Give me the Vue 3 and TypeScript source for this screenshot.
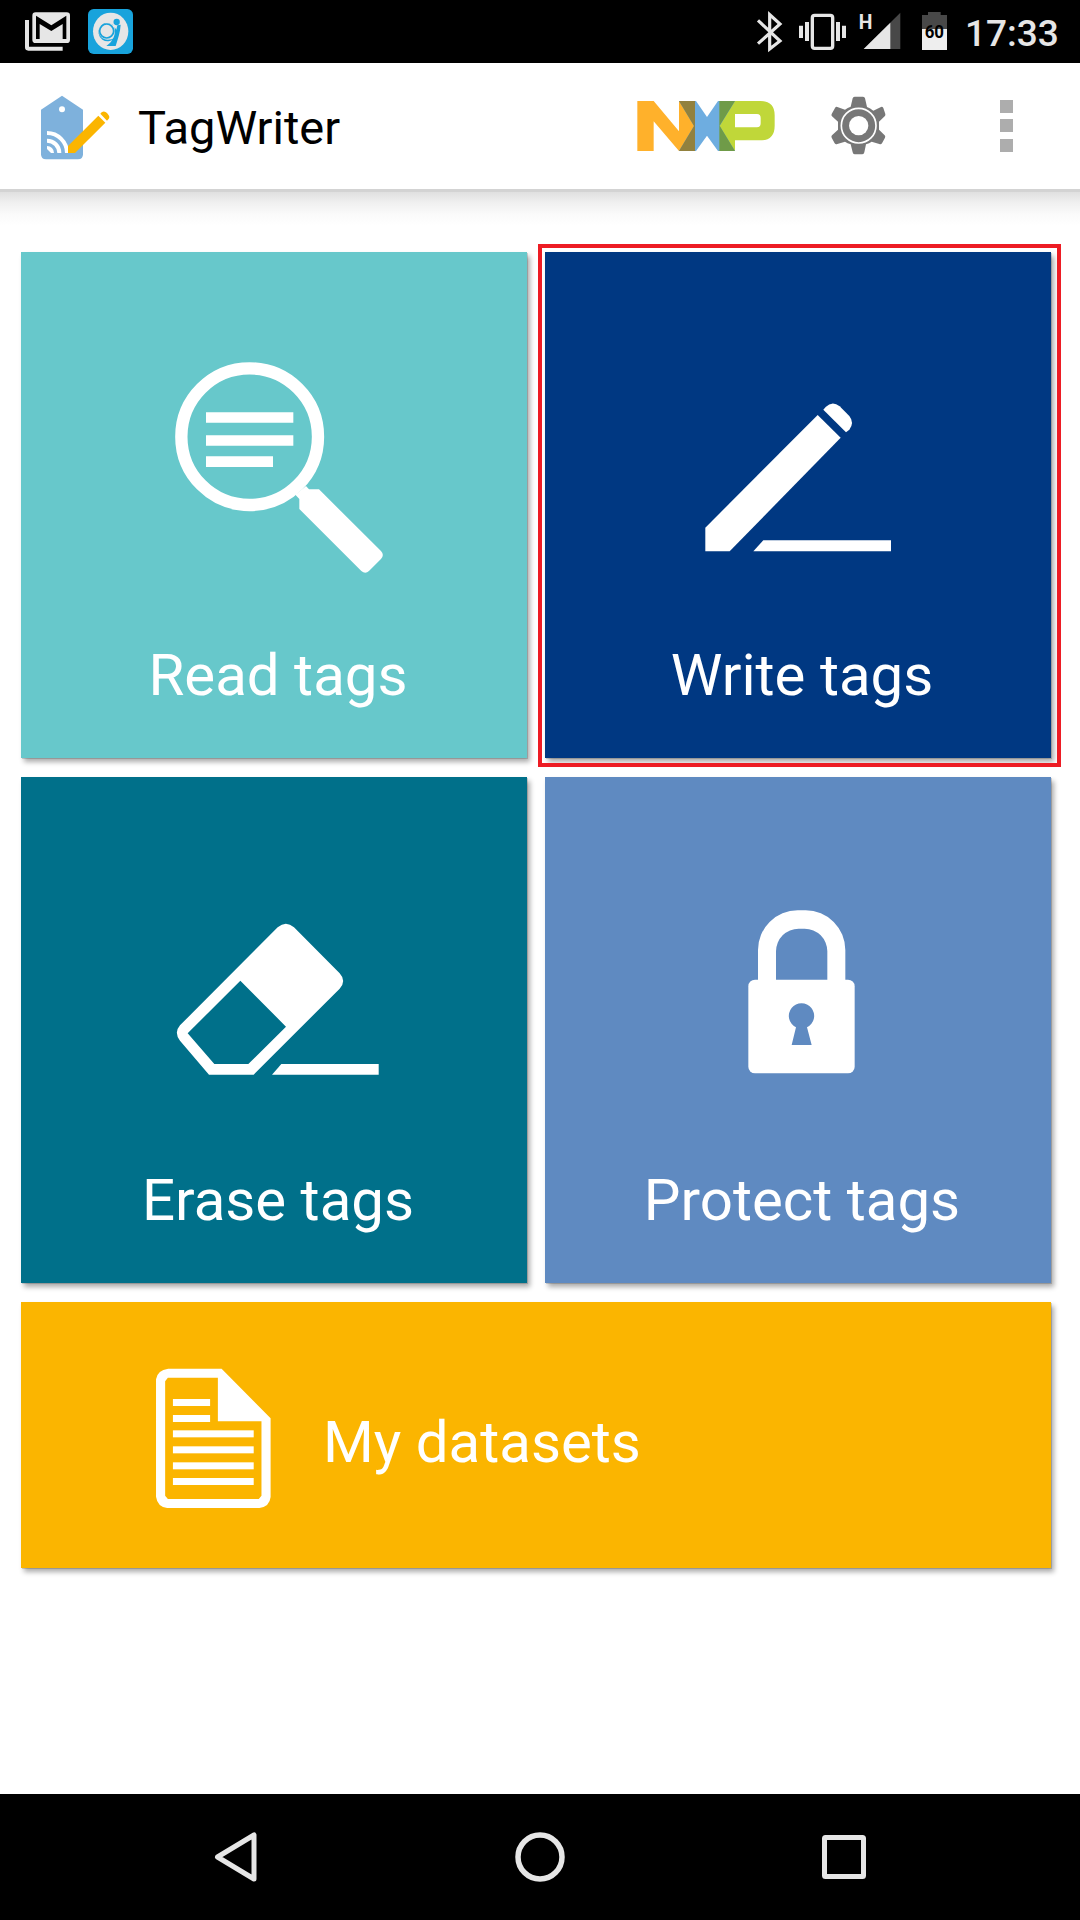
<script setup lang="ts">
interface Tile {
  id: string
  label: string
  color: string
  view: string
}

const tiles: Tile[] = [
  { id: 'read', label: 'Read tags', color: '#67c8cb', view: '21 252 506 390' },
  { id: 'write', label: 'Write tags', color: '#003882', view: '545 252 506 390' },
  { id: 'erase', label: 'Erase tags', color: '#00708a', view: '21 777 506 390' },
  { id: 'protect', label: 'Protect tags', color: '#5f8ac1', view: '545 777 506 390' },
]

const fileLines = [
  { y: 177, w: 110 },
  { y: 225, w: 110 },
  { y: 271, w: 239 },
  { y: 319, w: 239 },
  { y: 367, w: 239 },
  { y: 414, w: 239 },
]
</script>

<template>
  <div class="screen">
    <div class="status">
      <svg class="status-left" viewBox="0 0 480 189">
        <path d="M75 60h12v80h101v12H85q-10 0-10-10z" fill="#e6e6e6" />
        <rect x="97" y="37" width="113" height="92" rx="10" fill="#e6e6e6" />
        <path d="M108 117V47l46 29 45-29v70h-11V72l-34 21-35-21v45z" fill="#000" />
        <rect x="264" y="27" width="135" height="135" rx="17" fill="#18a3dc" />
        <ellipse cx="332" cy="94" rx="53" ry="56" fill="#e6e6e6" />
        <circle cx="350" cy="66" r="9.500" fill="#18a3dc" />
        <path d="M344 82l5 7 3-13 10-2c-1 23-9 43-15 64h-28c14-9 21-20 25-36z" fill="#18a3dc" />
        <path d="M341 77a27 27 0 1 0 5 33c-7 7-14 9-23 9-15 0-26-11-26-25 0-15 11-25 25-25 8 0 14 3 19 8z" fill="#18a3dc" />
        <circle cx="320" cy="93" r="21" fill="none" stroke="#18a3dc" stroke-width="5" />
      </svg>
      <svg class="status-right" viewBox="0 0 690 189">
        <path d="M84 61l66 62-31 24V44l31 28-66 59" fill="none" stroke="#e6e6e6" stroke-width="9.500" />
        <rect x="247" y="46" width="61" height="99" rx="7" fill="none" stroke="#e6e6e6" stroke-width="10" />
        <path d="M207 77h12v37h-12zM225 66h12v57h-12zM318 66h12v57h-12zM336 77h12v37h-12z" fill="#e6e6e6" />
        <text x="386" y="86" class="net" textLength="41" lengthAdjust="spacingAndGlyphs">H</text>
        <path d="M511 38v109H401z" fill="#484848" />
        <path d="M481 68v79H401z" fill="#e6e6e6" />
        <path d="M576 45h18v-9h38v9h19v42h-75z" fill="#484848" />
        <path d="M576 87h75v63h-75z" fill="#eee" />
        <text x="584" y="115" textLength="58" lengthAdjust="spacingAndGlyphs" class="level">60</text>
      </svg>
      <span class="clock">17:33</span>
    </div>

    <header class="bar">
      <svg class="logo" viewBox="0 189 390 378">
        <path d="M123 329l63-42 63 42v134q0 15-15 15h-96q-15 0-15-15z" fill="#7eb1dc" />
        <circle cx="186" cy="328" r="9" fill="#fff" />
        <g fill="none" stroke="#fff" stroke-width="12">
          <path d="M141 399a60 60 0 0 1 60 60" />
          <path d="M141 422a37 37 0 0 1 37 37" />
        </g>
        <path d="M141 438a21 21 0 0 1 21 21h-9l-12-12z" fill="#fff" />
        <path d="M204 438l91-91 21 21-91 91h-21z" fill="#fbb500" />
        <path d="M301 341l4-4q8-6 16 2l4 5q6 7 0 14l-4 4z" fill="#fbb500" />
      </svg>
      <h1>TagWriter</h1>
      <svg class="actions" viewBox="600 189 1440 378">
        <g transform="translate(600 180)">
          <path d="M112 123h49l76 91v-91h49v150h-49l-76-89v89h-49z" fill="#ffb12b" />
          <path d="M237 123h51l33 48 33-48h51v150h-51l-33-46-33 46h-51l45-75z" fill="#6eade0" />
          <path d="M237 123h48v150h-48l45-75z" fill="#92813e" />
          <path d="M405 123h76q43 0 43 43v31q0 44-43 44h-76v32l-46-75zM405 162v40h66q11 0 11-12v-16q0-12-11-12z" fill="#c0d739" fill-rule="evenodd" />
          <path d="M358 123h47l-46 74 46 76h-47z" fill="#6f9b48" />
          <path d="M764 110h25q5 0 6 5l6 26q10 4 19 11l23-11q4-2 7 3l6 18q1 4-2 7l-17 16v24l17 17q3 3 1 7l-9 17q-3 4-8 2l-23-7q-7 5-17 8l-5 24q-1 6-6 6h-23q-5 0-6-6l-6-24q-10-3-17-8l-23 7q-5 2-8-2l-9-17q-2-4 1-7l18-17v-24l-18-16q-3-3-1-7l10-18q3-5 7-3l23 8q8-6 17-9l6-25q1-5 6-5z" fill="#777" />
          <circle cx="776" cy="197" r="52" fill="none" stroke="#fff" stroke-width="5" />
          <circle cx="776" cy="197" r="29" fill="#fff" />
          <path d="M1200 120h39v39h-39zM1200 177h39v39h-39zM1200 237h39v39h-39z" fill="#adadad" />
        </g>
      </svg>
    </header>

    <main class="content">
      <div class="grid">
        <button
          v-for="tile in tiles"
          :key="tile.id"
          class="tile"
          :class="{ selected: tile.id === 'write' }"
          :style="{ backgroundColor: tile.color }"
        >
          <svg class="glyph" :viewBox="tile.view" fill="#fff">
            <g v-if="tile.id === 'read'" transform="translate(140 340) scale(.33333)">
              <circle cx="329" cy="290" r="205" fill="none" stroke="#fff" stroke-width="37" />
              <path d="M198 217h262v31H198zM198 286h262v31H198zM198 349h201v32H198z" />
              <path d="M498 438l9 10h30l186 185q11 12 0 24l-36 36q-11 11-23 0L478 507v-30l-12-13z" />
            </g>
            <g v-else-if="tile.id === 'write'" transform="translate(660 380) scale(.33333)">
              <path d="M136 443l337-338 69 68-333 341h-73z" />
              <path d="M490 89l7-8q20-20 42-2l29 29q16 20 0 41l-10 8z" />
              <path d="M310 481h383v33H280z" />
            </g>
            <g v-else-if="tile.id === 'erase'" transform="translate(130 900) scale(.33333)">
              <path d="M443 82q25-21 49 0l137 138q21 23 0 46L371 524H237l-87-102q-19-24 0-46zM331 242L173 400l80 92h102l113-112z" fill-rule="evenodd" />
              <path d="M454 492h292v32H426z" />
            </g>
            <g v-else transform="translate(630 890) scale(.33333)">
              <path d="M384 270v-90a119 119 0 0 1 119-119h24a119 119 0 0 1 119 119v90h-54v-86a68 68 0 0 0-68-68h-18a68 68 0 0 0-68 68v86z" />
              <rect x="355" y="269" width="319" height="281" rx="20" />
              <path d="M498 412a38 38 0 1 1 33 0l14 53h-60z" :fill="tile.color" />
            </g>
          </svg>
          <span class="label">{{ tile.label }}</span>
        </button>
      </div>
      <button class="tile wide">
        <svg class="file" viewBox="-322.500 -114 846.200 798" preserveAspectRatio="none" fill="#fff">
          <path d="M113 86h158l145 149v236q-3 29-33 33H110q-29-4-33-34V118q4-28 36-32zM112 113l-8 11v343l8 10h269l8-10V244H260V113z" fill-rule="evenodd" />
          <rect v-for="line in fileLines" :key="line.y" x="127" :y="line.y" :width="line.w" height="21" />
        </svg>
        <span class="label">My datasets</span>
      </button>
    </main>

    <nav class="nav">
      <svg viewBox="0 1794 1080 126" fill="none" stroke="#e6e6e6" stroke-width="5" stroke-linejoin="round">
        <path d="M217.500 1857l36.500-22v44z" />
        <circle cx="540" cy="1857" r="22" stroke-width="5.500" />
        <rect x="824.500" y="1837.500" width="39" height="39" rx="1" />
      </svg>
    </nav>
  </div>
</template>

<style>
body {
  margin: 0;
}
</style>

<style scoped>
.screen {
  width: 1080px;
  height: 1920px;
  display: flex;
  flex-direction: column;
  background: #fff;
  font-family: Roboto, "Liberation Sans", sans-serif;
  overflow: hidden;
}
svg {
  display: block;
  flex: none;
}
.status {
  height: 63px;
  background: #000;
  display: flex;
}
.status-left {
  width: 160px;
  height: 63px;
}
.status-right {
  width: 230px;
  height: 63px;
  margin-left: 570px;
}
.net {
  font-size: 62px;
  font-weight: 700;
  fill: #e6e6e6;
}
.level {
  font-size: 55px;
  font-weight: 700;
  fill: #000;
}
.clock {
  margin-left: 5px;
  font-size: 37px;
  font-weight: 500;
  line-height: 67px;
  color: #e6e6e6;
  white-space: nowrap;
}
.bar {
  height: 126px;
  display: flex;
  background: #fff;
}
.logo {
  width: 130px;
  height: 126px;
}
h1 {
  margin: 0 0 0 8px;
  width: 462px;
  font-size: 47px;
  font-weight: 400;
  line-height: 129px;
  color: #000;
}
.actions {
  width: 480px;
  height: 126px;
}
.content {
  flex: 1;
  padding: 63px 29px 0 21px;
  background: linear-gradient(#d3d3d3 0 3px, #e0e0e0 3px, #f0f0f0 14px, #fafafa 25px, #fff 36px) no-repeat 0 0 / 100% 36px;
}
.grid {
  display: grid;
  grid-template-columns: 506px 506px;
  gap: 19px 18px;
}
.tile {
  display: flex;
  flex-direction: column;
  justify-content: flex-start;
  align-items: center;
  border: 0;
  padding: 0;
  height: 506px;
  color: #fff;
  font: inherit;
  box-shadow: 1px 1px 0 rgba(0, 0, 0, 0.15), 3px 4px 5px rgba(0, 0, 0, 0.33);
}
.selected {
  position: relative;
}
.selected::after {
  content: "";
  position: absolute;
  inset: -8px -10px -9px -7px;
  border: 4px solid #ed1c24;
}
.glyph {
  width: 506px;
  height: 390px;
}
.label {
  display: block;
  font-size: 58.2px;
  line-height: 66px;
  white-space: nowrap;
}
.grid .label {
  padding-left: 8px;
}
.wide {
  width: 1030px;
  height: 266px;
  margin-top: 19px;
  background: #fbb500;
  flex-direction: row;
}
.file {
  width: 286px;
  height: 266px;
}
.wide .label {
  margin: 13px 0 0 16px;
}
.nav {
  height: 126px;
  background: #000;
}
.nav svg {
  width: 1080px;
  height: 126px;
}
</style>
